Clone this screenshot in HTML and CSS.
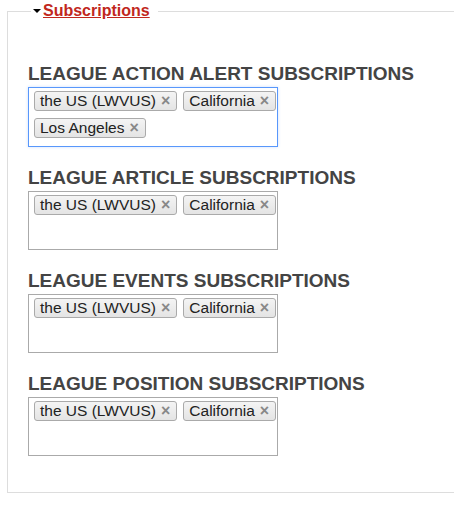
FILE: index.html
```html
<!DOCTYPE html>
<html lang="en">

<head>
    <meta charset="UTF-8">
    <title>Subscriptions</title>
    <link rel="stylesheet" href="styles.css">
</head>

<body>
    <fieldset class="subs">
        <legend><span class="caret"></span><a href="#">Subscriptions</a></legend>

        <div class="group">
            <h3>League Action Alert Subscriptions</h3>
            <ul class="chosen focus">
                <li class="tag">the US (LWVUS)<span class="x">&times;</span></li>
                <li class="tag">California<span class="x">&times;</span></li>
                <li class="tag">Los Angeles<span class="x">&times;</span></li>
            </ul>
        </div>

        <div class="group">
            <h3>League Article Subscriptions</h3>
            <ul class="chosen">
                <li class="tag">the US (LWVUS)<span class="x">&times;</span></li>
                <li class="tag">California<span class="x">&times;</span></li>
            </ul>
        </div>

        <div class="group">
            <h3>League Events Subscriptions</h3>
            <ul class="chosen">
                <li class="tag">the US (LWVUS)<span class="x">&times;</span></li>
                <li class="tag">California<span class="x">&times;</span></li>
            </ul>
        </div>

        <div class="group">
            <h3>League Position Subscriptions</h3>
            <ul class="chosen">
                <li class="tag">the US (LWVUS)<span class="x">&times;</span></li>
                <li class="tag">California<span class="x">&times;</span></li>
            </ul>
        </div>
    </fieldset>
</body>

</html>
```

FILE: styles.css
```css
body {
    font-family: "Liberation Sans", Arial, sans-serif;
    background: #fff;
    margin: 0;
    padding-top: 2px;
    overflow: hidden;
}

.subs {
    margin: 0 -20px 0 7px;
    border: 1px solid #ddd;
    padding: 43px 20px 36px 20px;

    legend {
        margin-left: 3px;
        padding: 0 8px 0 2px;
        display: flex;
        align-items: center;
        font-size: 16px;
        font-weight: bold;

        a {
            color: #c1271d;
        }
    }
}

.caret {
    width: 0;
    height: 0;
    border-left: 4px solid transparent;
    border-right: 4px solid transparent;
    border-top: 4px solid #000;
    margin-right: 2px;
}

.group {
    margin-bottom: 20px;

    &:last-child {
        margin-bottom: 0;
    }

    h3 {
        margin: 0 0 2px;
        font-size: 19px;
        line-height: 22px;
        text-transform: uppercase;
        color: #444;
    }
}

.chosen {
    display: flex;
    flex-wrap: wrap;
    align-content: flex-start;
    gap: 7px 6px;
    list-style: none;
    margin: 0;
    padding: 3px 0 8px 5px;
    width: 250px;
    min-height: 59px;
    box-sizing: border-box;
    border: 1px solid #aaa;
    background: #fff;

    &.focus {
        border-color: #5897fb;
        box-shadow: 0 0 3px rgba(88, 151, 251, .3);
    }
}

.tag {
    display: flex;
    align-items: center;
    height: 20px;
    padding: 0 6px 0 5px;
    box-sizing: border-box;
    border: 1px solid #aaa;
    border-radius: 3px;
    background: linear-gradient(#f4f4f4, #e4e4e4);
    font-size: 15.5px;
    color: #222;

    .x {
        margin-left: 5px;
        color: #888;
        font-weight: bold;
        font-size: 16px;
    }
}
```
